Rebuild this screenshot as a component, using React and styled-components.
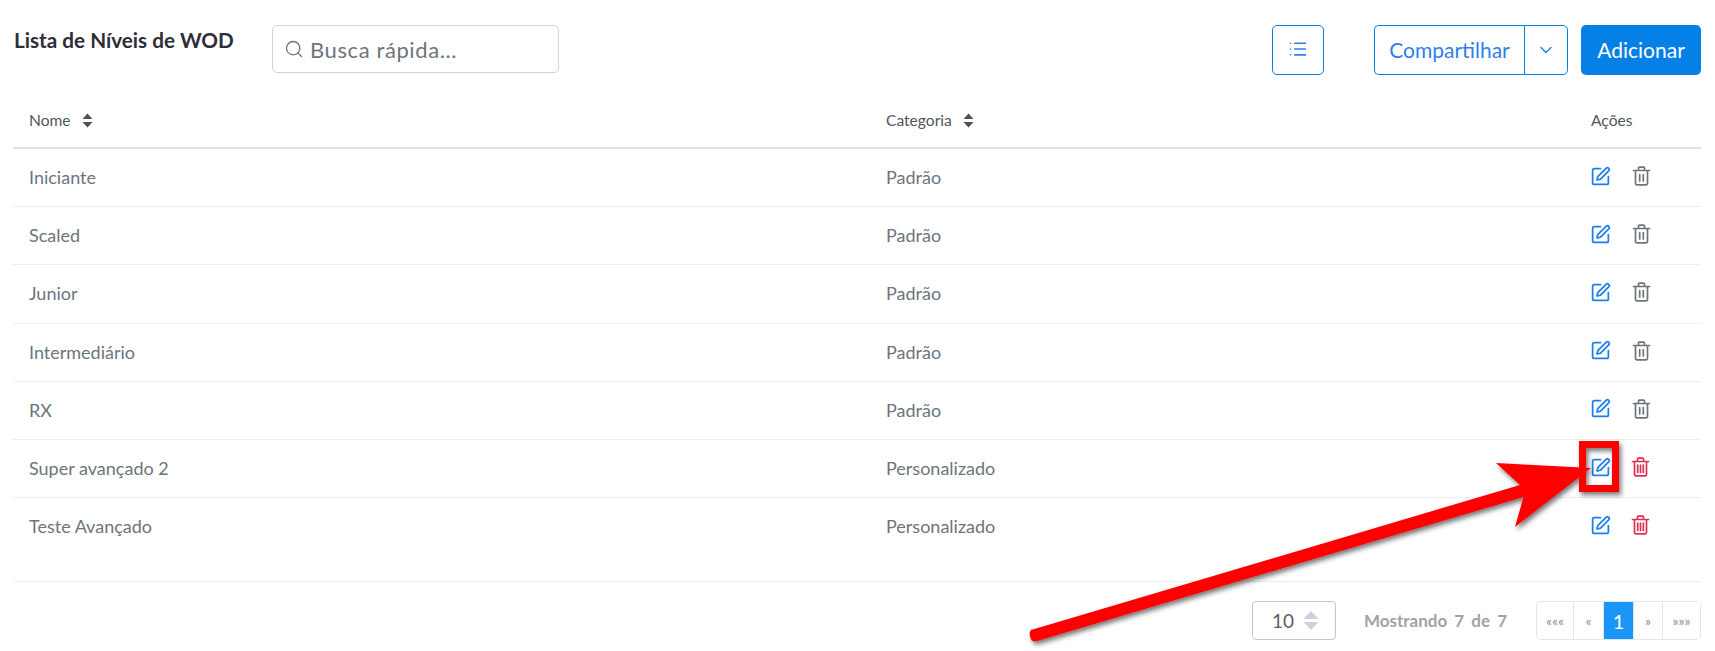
import React from "react";
import styled, { createGlobalStyle } from "styled-components";
import { Search, List, ChevronDown, SquarePen } from "lucide-react";

const Global = createGlobalStyle`
  html, body { margin: 0; padding: 0; background: #fff; }
  body { font-family: "Lato", "Open Sans", sans-serif; overflow: hidden; }
`;

const Page = styled.div`
  position: relative;
  width: 1715px;
  height: 651px;
  padding: 25px 14px 0 13px;
  box-sizing: border-box;
  overflow: hidden;
`;

const Toolbar = styled.header`
  display: flex;
  align-items: flex-start;
  height: 50px;
`;

const Title = styled.h1`
  margin: 3px 0 0 1px;
  width: 258px;
  flex: none;
  font-size: 20.7px;
  line-height: 24px;
  font-weight: 700;
  color: #2e2e38;
  white-space: nowrap;
`;

const SearchBox = styled.label`
  display: flex;
  align-items: center;
  gap: 6px;
  width: 287px;
  height: 48px;
  box-sizing: border-box;
  padding: 0 11px;
  border: 1px solid #ced4da;
  border-radius: 5px;
  color: #6c757d;
  font-size: 22px;
  letter-spacing: 0.6px;
`;

const Spacer = styled.div`
  flex: 1;
`;

const OutlineButton = styled.button`
  display: flex;
  align-items: center;
  justify-content: center;
  height: 50px;
  padding: 0 0 2px;
  background: #fff;
  border: 1px solid #0a7fe3;
  border-radius: 5px;
  color: #2f7fe8;
  font-family: inherit;
  font-size: 21px;
`;

const FilterButton = styled(OutlineButton)`
  width: 52px;
  margin-right: 50px;
`;

const SplitGroup = styled.div`
  display: flex;
  width: 194px;
  height: 50px;
  margin-right: 13px;
`;

const SplitMain = styled(OutlineButton)`
  width: 150px;
  border-right: 0;
  border-radius: 5px 0 0 5px;
`;

const SplitCaret = styled(OutlineButton)`
  width: 44px;
  padding: 0;
  border-radius: 0 5px 5px 0;
`;

const PrimaryButton = styled.button`
  width: 120px;
  height: 50px;
  padding: 0 0 2px;
  background: #0580e6;
  border: 0;
  border-radius: 5px;
  color: #fff;
  font-family: inherit;
  font-size: 21px;
`;

const Row = styled.div`
  display: grid;
  grid-template-columns: 856px 705px 127px;
  align-items: center;
  box-sizing: border-box;
`;

const HeadRow = styled(Row)`
  height: 56px;
  margin-top: 18px;
  border-bottom: 2px solid #dee2e6;
  color: #50565c;
  font-size: 15.6px;
`;

const BodyRow = styled(Row)`
  height: 58.2px;
  padding-bottom: 1px;
  border-bottom: 1px solid ${(p) => (p.$last ? "transparent" : "#eceef0")};
  color: #6c757d;
  font-size: 18px;
`;

const Cell = styled.div`
  display: flex;
  align-items: center;
  padding-left: ${(p) => (p.$first ? "16px" : "17px")};
`;

const SortIcon = styled.svg`
  width: 11px;
  height: 15px;
  margin-left: 11px;
  fill: #4b5157;
`;

const Actions = styled(Cell)`
  gap: 21px;
  margin-top: -2px;
`;

const EditIcon = styled(SquarePen)`
  width: 21px;
  height: 21px;
  color: #1b7fee;
  margin-left: -1px;
`;

const TrashSvg = styled.svg`
  width: 19px;
  height: 20px;
  fill: none;
  stroke: ${(p) => (p.$danger ? "#dc3250" : "#6e7479")};
  stroke-width: 1.7;
  stroke-linecap: round;
  stroke-linejoin: round;
  margin-left: ${(p) => (p.$danger ? "-1px" : "0")};
`;

const Footer = styled.footer`
  display: flex;
  align-items: center;
  justify-content: flex-end;
  height: 39px;
  margin-top: 25px;
  padding-top: 19px;
  border-top: 1px solid #eceef0;
  color: #6c757d;
`;

const PageSize = styled.div`
  display: flex;
  align-items: center;
  justify-content: space-between;
  width: 84px;
  height: 39px;
  box-sizing: border-box;
  padding: 0 16px 0 19px;
  border: 1px solid #c5c7cf;
  border-radius: 4px;
  font-size: 19px;
  color: #5a6066;
`;

const Updown = styled.svg`
  width: 16px;
  height: 19px;
  fill: #cfd2de;
`;

const Showing = styled.div`
  width: 172px;
  margin-left: 28px;
  color: #9fa2a8;
  font-size: 17px;
  font-weight: 700;
  word-spacing: 3px;
  white-space: nowrap;
`;

const Pager = styled.nav`
  display: flex;
  height: 39px;
  box-sizing: border-box;
  border: 1px solid #e4e6ec;
  border-radius: 5px;
  overflow: hidden;
`;

const PageCell = styled.div`
  display: flex;
  align-items: center;
  justify-content: center;
  width: ${(p) => p.$w}px;
  box-sizing: border-box;
  border-left: ${(p) => (p.$first ? "0" : "1px solid #e4e6ec")};
  background: ${(p) => (p.$active ? "#1a96f8" : "#fff")};
  color: ${(p) => (p.$active ? "#fff" : "#8a8f96")};
  font-size: ${(p) => (p.$active ? "20px" : "14px")};
`;

const Annotation = styled.svg`
  position: absolute;
  left: 0;
  top: 0;
  width: 1715px;
  height: 651px;
  pointer-events: none;
`;

const rows = [
  ["Iniciante", "Padrão", false],
  ["Scaled", "Padrão", false],
  ["Junior", "Padrão", false],
  ["Intermediário", "Padrão", false],
  ["RX", "Padrão", false],
  ["Super avançado 2", "Personalizado", true],
  ["Teste Avançado", "Personalizado", true],
];

const Sort = () => (
  <SortIcon viewBox="0 0 11 15">
    <path d="M5.5 0.5 10.5 6H.5zM5.5 14.5 .5 9h10z" />
  </SortIcon>
);

const Trash = ({ danger }) => (
  <TrashSvg $danger={danger} viewBox="0 0 19 20">
    <path d="M1.5 4.5h16M6.5 4.5V2.2c0-.6.4-1 1-1h4c.6 0 1 .4 1 1v2.3M3.5 4.5v13c0 .8.6 1.3 1.3 1.3h9.4c.7 0 1.3-.5 1.3-1.3v-13" />
    {danger ? <path d="M6.7 8v7.5M9.5 8v7.5M12.3 8v7.5" /> : <path d="M7.7 8.5v6.5M11.3 8.5v6.5" />}
  </TrashSvg>
);

export default function App() {
  return (
    <Page>
      <Global />
      <Toolbar>
        <Title>Lista de Níveis de WOD</Title>
        <SearchBox>
          <Search size={20} strokeWidth={1.6} />
          Busca rápida...
        </SearchBox>
        <Spacer />
        <FilterButton aria-label="Filtros">
          <List size={20} strokeWidth={1.9} />
        </FilterButton>
        <SplitGroup>
          <SplitMain>Compartilhar</SplitMain>
          <SplitCaret aria-label="Mais">
            <ChevronDown size={20} strokeWidth={1.8} />
          </SplitCaret>
        </SplitGroup>
        <PrimaryButton>Adicionar</PrimaryButton>
      </Toolbar>

      <HeadRow>
        <Cell $first>Nome<Sort /></Cell>
        <Cell>Categoria<Sort /></Cell>
        <Cell>Ações</Cell>
      </HeadRow>

      {rows.map(([name, cat, custom], i) => (
        <BodyRow key={name} $last={i === rows.length - 1}>
          <Cell $first>{name}</Cell>
          <Cell>{cat}</Cell>
          <Actions>
            <EditIcon strokeWidth={2} />
            <Trash danger={custom} />
          </Actions>
        </BodyRow>
      ))}

      <Footer>
        <PageSize>
          10
          <Updown viewBox="0 0 16 19">
            <path d="M8 0 15.5 8H.5zM8 19 .5 11h15z" />
          </Updown>
        </PageSize>
        <Showing>Mostrando 7 de 7</Showing>
        <Pager>
          <PageCell $first $w={36}>«««</PageCell>
          <PageCell $w={30}>«</PageCell>
          <PageCell $active $w={30}>1</PageCell>
          <PageCell $w={29}>»</PageCell>
          <PageCell $w={38}>»»»</PageCell>
        </Pager>
      </Footer>

      <Annotation viewBox="0 0 1715 651">
        <defs>
          <filter id="sh" x="-10%" y="-30%" width="120%" height="160%">
            <feDropShadow dx="2" dy="3" stdDeviation="2.5" floodColor="#000" floodOpacity="0.55" />
          </filter>
        </defs>
        <g filter="url(#sh)">
          <rect x="1582.5" y="444.5" width="33" height="44" fill="none" stroke="#ff0000" strokeWidth="7" />
          <path
            d="M1031 630 1520 485 1496 463 1591 468 1515 527 1523.5 497 1037 641Q1031 643 1030 636Q1029 632 1031 630Z"
            fill="#ff0000"
          />
        </g>
      </Annotation>
    </Page>
  );
}
